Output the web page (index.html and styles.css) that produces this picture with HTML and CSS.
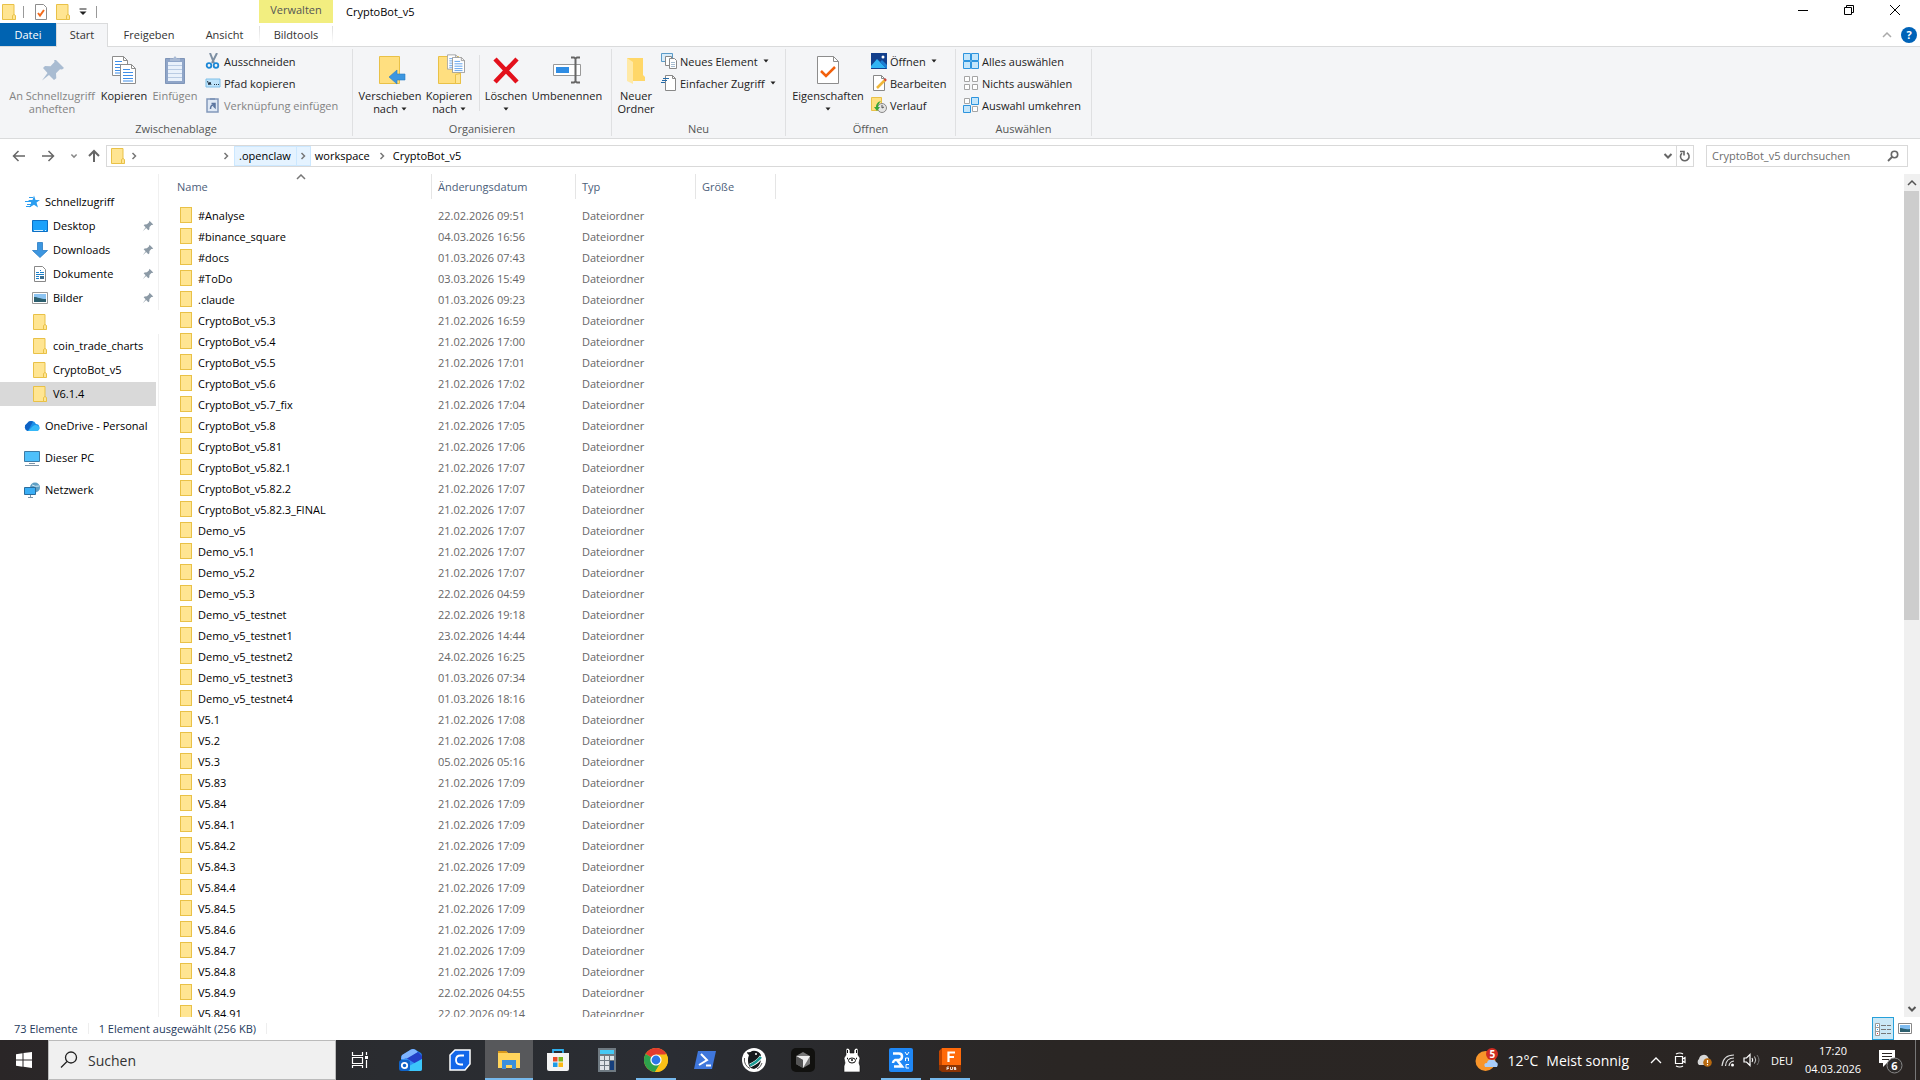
FILE: index.html
```html
<!DOCTYPE html>
<html lang="de">
<head>
<meta charset="utf-8">
<title>CryptoBot_v5</title>
<link rel="stylesheet" href="styles.css">
</head>
<body>
<svg class="defs" aria-hidden="true">
  <symbol id="folder" viewBox="0 0 14 16"><path d="M.5.5h11.500v11l1 .5v3.500H.5z" fill="#ffe592" stroke="#e9c147"/><path d="M10.500 15.500v-4l1.500-1 1.500 1v4z" fill="#ffe592" stroke="#e9c147"/></symbol>
  <symbol id="pin" viewBox="0 0 16 16"><path d="M10 1l5 5-1.500.8-1-.1-2.500 2.600-.2 3-1.300 1.200-3-3L1 15l3.800-5.200-2.600-2.700 1.300-1.200 3-.1 2.700-2.500z"/></symbol>
  <symbol id="chev" viewBox="0 0 8 8"><path d="M2.500 1L5.500 4l-3 3" fill="none" stroke="#777" stroke-width="1.500"/></symbol>
  <symbol id="down" viewBox="0 0 10 8"><path d="M1.500 2L5 5.500 8.500 2" fill="none" stroke="currentColor" stroke-width="2"/></symbol>
  <symbol id="up" viewBox="0 0 10 8"><path d="M1 6l4-4 4 4" fill="none" stroke="currentColor" stroke-width="1.500"/></symbol>
  <symbol id="tri" viewBox="0 0 6 4"><path d="M.5.5h5L3 3.500z" fill="#222"/></symbol>
  <symbol id="lines" viewBox="0 0 16 20"><path d="M.5.5h11l4 4v15H.5z" fill="#fff" stroke="#8d8d8d"/><path d="M11.500.5v4h4" fill="none" stroke="#8d8d8d"/><path d="M3 5.500h7M3 8.500h10M3 11.500h10M3 14.500h10M3 17h10" stroke="#3f8ee8"/></symbol>
</svg>

<header class="titlebar">
  <div class="quick">
    <svg width="14" height="16"><use href="#folder"/></svg><i class="tick"></i>
    <button type="button" aria-label="Eigenschaften"><svg width="12" height="16" viewBox="0 0 12 16"><path d="M.5.5h8l3 3v12H.5z" fill="#fff" stroke="#8d8d8d"/><path d="M3 9l2 2.500L9 6" fill="none" stroke="#f26a1b" stroke-width="2"/></svg></button>
    <button type="button" aria-label="Neuer Ordner"><svg width="14" height="16"><use href="#folder"/></svg></button>
    <button type="button" aria-label="Anpassen"><svg width="8" height="8" viewBox="0 0 8 8"><path d="M.5 1h7" stroke="#222"/><path d="M.5 3.500h7L4 7z" fill="#222"/></svg></button><i class="tick"></i>
  </div>
  <div class="context">Verwalten</div>
  <h1>CryptoBot_v5</h1>
  <div class="winbtns">
    <button type="button" aria-label="Minimieren"><svg width="10" height="10"><path d="M0 5.500h10" stroke="#000"/></svg></button>
    <button type="button" aria-label="Verkleinern"><svg width="10" height="10"><path d="M.5 2.500h7v7h-7zM2.500 2.500v-2h7v7h-2" fill="none" stroke="#000"/></svg></button>
    <button type="button" aria-label="Schließen"><svg width="10" height="10"><path d="M0 0l10 10M10 0L0 10" stroke="#000"/></svg></button>
  </div>
</header>

<nav class="tabs">
  <a class="file" href="#datei">Datei</a><a class="active" href="#start">Start</a><a class="share" href="#freigeben">Freigeben</a><a class="view" href="#ansicht">Ansicht</a><a class="tools" href="#bildtools">Bildtools</a>
  <div class="help">
    <button type="button" aria-label="Menüband minimieren"><svg width="10" height="8" color="#aaa"><use href="#up"/></svg></button>
    <button type="button" class="q" aria-label="Hilfe">?</button>
  </div>
</nav>

<section class="ribbon">
  <div class="group clipboard">
    <div class="tools-row">
      <button type="button" class="big w94 off"><svg width="32" height="32" viewBox="0 0 32 32"><path d="M20 6l8 8-2 1.500-2-.3-4 4 .3 5L18 26l-5-5-7 5.500 5.500-7.500-4.500-5 2-2 5.500.2 4-4.200-.3-2z" fill="#a9bcd2"/></svg>An Schnellzugriff anheften</button>
      <button type="button" class="big w50"><svg width="32" height="32" viewBox="0 0 32 32"><use href="#lines" x="4" y="2" width="16" height="20"/><use href="#lines" x="12" y="10" width="16" height="20"/></svg>Kopieren</button>
      <button type="button" class="big w52 off"><svg width="32" height="32" viewBox="0 0 32 32"><path d="M6.500 4.500h19v25h-19z" fill="#8fa5c8" stroke="#7f95b8"/><path d="M9 8h14v19H9z" fill="#e9f1fb"/><path d="M9 11.500h14M9 15.500h14M9 19.500h14M9 23.500h14" stroke="#b9cbe3"/><path d="M11 7V4.500h3L16 2l2 2.500h3V7z" fill="#a9bad4"/></svg>Einfügen</button>
      <div class="stack">
        <button type="button"><svg width="16" height="16" viewBox="0 0 16 16"><path d="M5 0l4 10M12 0L7 10" stroke="#7d8fa3" stroke-width="2"/><circle cx="4" cy="12.500" r="2.300" fill="none" stroke="#1c87d6" stroke-width="1.800"/><circle cx="11" cy="12.500" r="2.300" fill="none" stroke="#1c87d6" stroke-width="1.800"/></svg>Ausschneiden</button>
        <button type="button"><svg width="16" height="16" viewBox="0 0 16 16"><path d="M1 4h14v8H1z" fill="#bfe4fb" stroke="#7ebfe8"/><path d="M2.500 6l1.500 4 1-3 1 3M9 9.500h1M11 9.500h1M13 9.500h1" fill="none" stroke="#234"/></svg>Pfad kopieren</button>
        <button type="button" class="off"><svg width="16" height="16" viewBox="0 0 16 16"><path d="M2 2h11v13H2z" fill="#dfe9f6" stroke="#8298ba" stroke-width="1.500"/><path d="M5 1h5v2H5z" fill="#8298ba"/><path d="M5.500 12c0-3 1-4 3-4V6.500H6.500 10v4L8.500 9" fill="none" stroke="#5c76a0" stroke-width="1.500"/></svg>Verknüpfung einfügen</button>
      </div>
    </div>
    <h2>Zwischenablage</h2>
  </div>
  <div class="group organize">
    <div class="tools-row">
      <button type="button" class="big w68"><svg width="32" height="32" viewBox="0 0 32 32"><path d="M5.500 2.500h20v27h-20z" fill="#ffdf80" stroke="#e9c147"/><path d="M31 20h-8v-4l-8 7 8 7v-4h8z" fill="#3c96e0" stroke="#2a7cc4" stroke-width=".6"/></svg><span>Verschieben nach <svg class="tri" width="6" height="4"><use href="#tri"/></svg></span></button>
      <button type="button" class="big w50"><svg width="32" height="32" viewBox="0 0 32 32"><path d="M5.500 2.500h20l2 18v9h-22z" fill="#ffdf80" stroke="#e9c147"/><path d="M22.500 29.500v-9l5-1v10z" fill="#ffe592" stroke="#e9c147"/><use href="#lines" x="14" y="0" width="12" height="16"/><use href="#lines" x="19" y="3" width="13" height="16"/></svg><span>Kopieren nach <svg class="tri" width="6" height="4"><use href="#tri"/></svg></span></button>
      <i class="vsep"></i>
      <button type="button" class="big w42"><svg width="32" height="32" viewBox="0 0 32 32"><path d="M5 5l22 23M27 5L5 28" stroke="#e3101b" stroke-width="4.500"/></svg><span>Löschen<br><svg class="tri" width="6" height="4"><use href="#tri"/></svg></span></button>
      <button type="button" class="big w80"><svg width="32" height="32" viewBox="0 0 32 32"><path d="M2.500 10.500h27v11h-27z" fill="#fff" stroke="#999"/><path d="M5 13h13v6H5z" fill="#2f8de4"/><path d="M24.500 4v24M20 3.500h3l1.500 1 1.500-1h3M20 28.500h3l1.500-1 1.500 1h3" stroke="#666" stroke-width="2" fill="none"/></svg>Umbenennen</button>
    </div>
    <h2>Organisieren</h2>
  </div>
  <div class="group">
    <div class="tools-row">
      <button type="button" class="big w48"><svg width="32" height="32" viewBox="0 0 32 32"><path d="M7 4h16v17l2 2v4H7z" fill="#ffd768"/><path d="M7 4l6 4v22l-6-3z" fill="#ffe9a6"/></svg>Neuer Ordner</button>
      <div class="stack">
        <button type="button"><svg width="16" height="16" viewBox="0 0 16 16"><path d="M.5.5h11v8H.5z" fill="#d8ecfa" stroke="#5b9bc8"/><path d="M4.500 3.500h6v9h-6z" fill="#fff" stroke="#888"/><path d="M8.500 5.500h5l2 2v8h-7z" fill="#fff" stroke="#888"/><path d="M10 9.500h4M10 11.500h4M10 13.500h4" stroke="#a6bcd0"/></svg>Neues Element <svg class="tri" width="6" height="4"><use href="#tri"/></svg></button>
        <button type="button"><svg width="16" height="16" viewBox="0 0 16 16"><path d="M4.500.5h7l3 3v12h-10z" fill="#fff" stroke="#888"/><path d="M11.500.5v3h3" fill="none" stroke="#888"/><path d="M2 3.500h6M1 5.500h5M0 7.500h4" stroke="#256ba8"/></svg>Einfacher Zugriff <svg class="tri" width="6" height="4"><use href="#tri"/></svg></button>
      </div>
    </div>
    <h2>Neu</h2>
  </div>
  <div class="group">
    <div class="tools-row">
      <button type="button" class="big w84"><svg width="32" height="32" viewBox="0 0 32 32"><path d="M5.500 2.500h16l5 5v22h-21z" fill="#fff" stroke="#8d8d8d"/><path d="M21.500 2.500v5h5" fill="none" stroke="#8d8d8d"/><path d="M9 17l5 5 9-9" fill="none" stroke="#f2600c" stroke-width="2.500"/></svg><span>Eigenschaften<br><svg class="tri" width="6" height="4"><use href="#tri"/></svg></span></button>
      <div class="stack">
        <button type="button"><svg width="16" height="16" viewBox="0 0 16 16"><path d="M0 0h16v16H0z" fill="#123f8c"/><path d="M0 13l6-7 9 9H0z" fill="#30b4f4"/><path d="M9 9l2-2 5 5v4z" fill="#1c7fd4"/><circle cx="12" cy="4" r="1.500" fill="#fff"/></svg>Öffnen <svg class="tri" width="6" height="4"><use href="#tri"/></svg></button>
        <button type="button"><svg width="16" height="16" viewBox="0 0 16 16"><path d="M2.500.5h8l3 3v12h-11z" fill="#fff" stroke="#888"/><path d="M10.500.5v3h3" fill="none" stroke="#888"/><path d="M6 13l8-8" stroke="#efb63a" stroke-width="2.500"/><path d="M13.500 5.500L15 4" stroke="#d0463c" stroke-width="2.500"/></svg>Bearbeiten</button>
        <button type="button"><svg width="16" height="16" viewBox="0 0 16 16"><path d="M.5.5h10v13H.5z" fill="#ffe07f" stroke="#e9c147"/><circle cx="11" cy="11" r="4.500" fill="#e4e4e4" stroke="#888"/><path d="M11 8v3l2-1" stroke="#555" fill="none"/><path d="M10 4c-4 1-5 4-5 6H3l3 4 3-4H7c0-2 1-4 3-6z" fill="#3aa53a"/></svg>Verlauf</button>
      </div>
    </div>
    <h2>Öffnen</h2>
  </div>
  <div class="group select">
    <div class="tools-row">
      <div class="stack">
        <button type="button"><svg width="16" height="16" viewBox="0 0 16 16"><path d="M.5.5h7v7h-7zM8.500.5h7v7h-7zM.5 8.500h7v7h-7zM8.500 8.500h7v7h-7z" fill="#c4e6fb" stroke="#2d94de"/></svg>Alles auswählen</button>
        <button type="button"><svg width="16" height="16" viewBox="0 0 16 16"><path d="M1.500 1.500h5v5h-5zM9.500 1.500h5v5h-5zM1.500 9.500h5v5h-5zM9.500 9.500h5v5h-5z" fill="#fff" stroke="#a5a5a5"/></svg>Nichts auswählen</button>
        <button type="button"><svg width="16" height="16" viewBox="0 0 16 16"><path d="M1.500 1.500h5v5h-5zM9.500 9.500h5v5h-5z" fill="#fff" stroke="#a5a5a5"/><path d="M8.500.5h7v7h-7zM.5 8.500h7v7h-7z" fill="#c4e6fb" stroke="#2d94de"/></svg>Auswahl umkehren</button>
      </div>
    </div>
    <h2>Auswählen</h2>
  </div>
</section>

<div class="addressbar">
  <div class="history">
    <button type="button" aria-label="Zurück"><svg width="14" height="12" viewBox="0 0 14 12"><path d="M13 6H2M6.500 1l-5 5 5 5" fill="none" stroke="#666" stroke-width="1.500"/></svg></button>
    <button type="button" aria-label="Vorwärts"><svg width="14" height="12" viewBox="0 0 14 12"><path d="M1 6h11M7.500 1l5 5-5 5" fill="none" stroke="#666" stroke-width="1.500"/></svg></button>
    <button type="button" aria-label="Verlauf"><svg width="8" height="6" color="#888"><use href="#down"/></svg></button>
    <button type="button" aria-label="Nach oben"><svg width="12" height="14" viewBox="0 0 12 14"><path d="M6 13V2M1 7l5-5 5 5" fill="none" stroke="#666" stroke-width="2"/></svg></button>
  </div>
  <div class="path">
    <svg width="14" height="16"><use href="#folder"/></svg>
    <svg class="first" width="8" height="8"><use href="#chev"/></svg>
    <svg width="8" height="8"><use href="#chev"/></svg>
    <div class="crumb hot"><a href="#openclaw">.openclaw</a><span><svg width="8" height="8"><use href="#chev"/></svg></span></div>
    <div class="crumb"><a href="#workspace">workspace</a><span><svg width="8" height="8"><use href="#chev"/></svg></span></div>
    <div class="crumb"><a href="#cryptobot">CryptoBot_v5</a></div>
    <div class="path-end">
      <button type="button" aria-label="Vorherige Orte"><svg width="10" height="8" color="#666"><use href="#down"/></svg></button>
      <button type="button" class="reload" aria-label="Aktualisieren"><svg width="12" height="12" viewBox="0 0 12 12"><path d="M8 2.800A4.300 4.300 0 1 1 3 3.200M1 1.500h4v4" fill="none" stroke="#666" stroke-width="1.600"/></svg></button>
    </div>
  </div>
  <form class="search">
    <input type="text" aria-label="CryptoBot_v5 durchsuchen" placeholder="CryptoBot_v5 durchsuchen">
    <svg width="12" height="12" viewBox="0 0 12 12"><circle cx="7.500" cy="4.500" r="3.200" fill="none" stroke="#666" stroke-width="1.600"/><path d="M5 7L1 11" stroke="#666" stroke-width="1.800"/></svg>
  </form>
</div>

<main>
  <nav class="side">
    <ul>
      <li class="root"><svg width="16" height="16" viewBox="0 0 16 16"><path d="M9 1.500l1.500 4.500H15l-3.500 2.600L13 13.500l-4-2.800-4.500 2.800 1.700-5L3 6h4.500z" fill="#2a9df0"/><path d="M4 3.500h4M0 7.500h6M2 10.500h4M1 12.500h5" stroke="#2a9df0"/></svg><a href="#s">Schnellzugriff</a></li>
      <li><svg width="16" height="16" viewBox="0 0 16 16"><path d="M.5 2.500h15v11H.5z" fill="#1ba1fb" stroke="#0c6fc4"/><path d="M2 12.500h9M13 12.500h1" stroke="#d5efff"/></svg><a href="#d">Desktop</a><svg class="pin" width="12" height="12"><use href="#pin"/></svg></li>
      <li><svg width="16" height="16" viewBox="0 0 16 16"><path d="M5.500.5h5v8h5L8 15.500.5 8.500h5z" fill="#3c96e0" stroke="#2a7cc4" stroke-width=".8"/></svg><a href="#dl">Downloads</a><svg class="pin" width="12" height="12"><use href="#pin"/></svg></li>
      <li><svg width="16" height="16" viewBox="0 0 16 16"><path d="M2.500.5h8l3 3v12h-11z" fill="#fff" stroke="#888"/><path d="M4 6.500h3M8 4.500h1M8 6.500h4M4 8.500h8M4 10.500h3M4 12.500h3" stroke="#1b7fc8"/><path d="M8 10h4v3H8z" fill="#3b6e8f"/></svg><a href="#dok">Dokumente</a><svg class="pin" width="12" height="12"><use href="#pin"/></svg></li>
      <li><svg width="16" height="16" viewBox="0 0 16 16"><path d="M.5 2.500h15v11H.5z" fill="#fff" stroke="#999"/><path d="M2 4h12v8H2z" fill="#8cc4f2"/><path d="M2 7c4 0 6 2 12 2v3H2z" fill="#2c5f6e"/></svg><a href="#b">Bilder</a><svg class="pin" width="12" height="12"><use href="#pin"/></svg></li>
      <li class="blank"><svg width="16" height="16"><use href="#folder"/></svg></li>
      <li><svg width="16" height="16"><use href="#folder"/></svg><a href="#c">coin_trade_charts</a></li>
      <li><svg width="16" height="16"><use href="#folder"/></svg><a href="#cb">CryptoBot_v5</a></li>
      <li class="current"><svg width="16" height="16"><use href="#folder"/></svg><a href="#v">V6.1.4</a></li>
      <li class="root gap"><svg width="16" height="16" viewBox="0 0 16 16"><path d="M4 13a4 4 0 0 1-1-7.500A5 5 0 0 1 12 6a3.600 3.600 0 0 1 1 7z" fill="#1a8ee8"/><path d="M4 13a4 4 0 0 1-1-7.500 5 5 0 0 1 6-2L4 13z" fill="#0f62c4"/><path d="M4 13l5-5a4 4 0 0 1 6.500 2c0 2-1.500 3-2.500 3z" fill="#35b8f8"/></svg><a href="#o">OneDrive - Personal</a></li>
      <li class="root gap"><svg width="16" height="16" viewBox="0 0 16 16"><path d="M.5 1.500h15v10H.5z" fill="#4fc0fb" stroke="#3d7ba6"/><path d="M5 13.500h6M1 15.500h14" stroke="#7c93a6"/></svg><a href="#p">Dieser PC</a></li>
      <li class="root gap"><svg width="16" height="16" viewBox="0 0 16 16"><circle cx="11" cy="5.500" r="5" fill="#5f9fc4"/><path d="M8 3q3 2 7 1" stroke="#d5e9f3" fill="none"/><path d="M.5 5.500h11v7H.5z" fill="#3aaef5" stroke="#2a6c9c"/><path d="M4 15.500h5M6.500 13v2" stroke="#7c93a6"/></svg><a href="#n">Netzwerk</a></li>
    </ul>
  </nav>
  <div class="files">
    <table>
      <colgroup><col class="c-name"><col class="c-date"><col class="c-type"><col class="c-size"></colgroup>
      <thead><tr><th>Name<svg class="sort" width="10" height="8"><use href="#up"/></svg></th><th>Änderungsdatum</th><th>Typ</th><th>Größe</th></tr></thead>
      <tbody>
      <tr><td>#Analyse</td><td>22.02.2026 09:51</td><td>Dateiordner</td><td></td></tr>
      <tr><td>#binance_square</td><td>04.03.2026 16:56</td><td>Dateiordner</td><td></td></tr>
      <tr><td>#docs</td><td>01.03.2026 07:43</td><td>Dateiordner</td><td></td></tr>
      <tr><td>#ToDo</td><td>03.03.2026 15:49</td><td>Dateiordner</td><td></td></tr>
      <tr><td>.claude</td><td>01.03.2026 09:23</td><td>Dateiordner</td><td></td></tr>
      <tr><td>CryptoBot_v5.3</td><td>21.02.2026 16:59</td><td>Dateiordner</td><td></td></tr>
      <tr><td>CryptoBot_v5.4</td><td>21.02.2026 17:00</td><td>Dateiordner</td><td></td></tr>
      <tr><td>CryptoBot_v5.5</td><td>21.02.2026 17:01</td><td>Dateiordner</td><td></td></tr>
      <tr><td>CryptoBot_v5.6</td><td>21.02.2026 17:02</td><td>Dateiordner</td><td></td></tr>
      <tr><td>CryptoBot_v5.7_fix</td><td>21.02.2026 17:04</td><td>Dateiordner</td><td></td></tr>
      <tr><td>CryptoBot_v5.8</td><td>21.02.2026 17:05</td><td>Dateiordner</td><td></td></tr>
      <tr><td>CryptoBot_v5.81</td><td>21.02.2026 17:06</td><td>Dateiordner</td><td></td></tr>
      <tr><td>CryptoBot_v5.82.1</td><td>21.02.2026 17:07</td><td>Dateiordner</td><td></td></tr>
      <tr><td>CryptoBot_v5.82.2</td><td>21.02.2026 17:07</td><td>Dateiordner</td><td></td></tr>
      <tr><td>CryptoBot_v5.82.3_FINAL</td><td>21.02.2026 17:07</td><td>Dateiordner</td><td></td></tr>
      <tr><td>Demo_v5</td><td>21.02.2026 17:07</td><td>Dateiordner</td><td></td></tr>
      <tr><td>Demo_v5.1</td><td>21.02.2026 17:07</td><td>Dateiordner</td><td></td></tr>
      <tr><td>Demo_v5.2</td><td>21.02.2026 17:07</td><td>Dateiordner</td><td></td></tr>
      <tr><td>Demo_v5.3</td><td>22.02.2026 04:59</td><td>Dateiordner</td><td></td></tr>
      <tr><td>Demo_v5_testnet</td><td>22.02.2026 19:18</td><td>Dateiordner</td><td></td></tr>
      <tr><td>Demo_v5_testnet1</td><td>23.02.2026 14:44</td><td>Dateiordner</td><td></td></tr>
      <tr><td>Demo_v5_testnet2</td><td>24.02.2026 16:25</td><td>Dateiordner</td><td></td></tr>
      <tr><td>Demo_v5_testnet3</td><td>01.03.2026 07:34</td><td>Dateiordner</td><td></td></tr>
      <tr><td>Demo_v5_testnet4</td><td>01.03.2026 18:16</td><td>Dateiordner</td><td></td></tr>
      <tr><td>V5.1</td><td>21.02.2026 17:08</td><td>Dateiordner</td><td></td></tr>
      <tr><td>V5.2</td><td>21.02.2026 17:08</td><td>Dateiordner</td><td></td></tr>
      <tr><td>V5.3</td><td>05.02.2026 05:16</td><td>Dateiordner</td><td></td></tr>
      <tr><td>V5.83</td><td>21.02.2026 17:09</td><td>Dateiordner</td><td></td></tr>
      <tr><td>V5.84</td><td>21.02.2026 17:09</td><td>Dateiordner</td><td></td></tr>
      <tr><td>V5.84.1</td><td>21.02.2026 17:09</td><td>Dateiordner</td><td></td></tr>
      <tr><td>V5.84.2</td><td>21.02.2026 17:09</td><td>Dateiordner</td><td></td></tr>
      <tr><td>V5.84.3</td><td>21.02.2026 17:09</td><td>Dateiordner</td><td></td></tr>
      <tr><td>V5.84.4</td><td>21.02.2026 17:09</td><td>Dateiordner</td><td></td></tr>
      <tr><td>V5.84.5</td><td>21.02.2026 17:09</td><td>Dateiordner</td><td></td></tr>
      <tr><td>V5.84.6</td><td>21.02.2026 17:09</td><td>Dateiordner</td><td></td></tr>
      <tr><td>V5.84.7</td><td>21.02.2026 17:09</td><td>Dateiordner</td><td></td></tr>
      <tr><td>V5.84.8</td><td>21.02.2026 17:09</td><td>Dateiordner</td><td></td></tr>
      <tr><td>V5.84.9</td><td>22.02.2026 04:55</td><td>Dateiordner</td><td></td></tr>
      <tr><td>V5.84.91</td><td>22.02.2026 09:14</td><td>Dateiordner</td><td></td></tr>
      </tbody>
    </table>
  </div>
  <div class="scrollbar">
    <button type="button" aria-label="Nach oben scrollen"><svg width="10" height="8"><use href="#up"/></svg></button>
    <div class="track"><div class="thumb"></div></div>
    <button type="button" aria-label="Nach unten scrollen"><svg width="10" height="8"><use href="#down"/></svg></button>
  </div>
</main>

<footer class="status">
  <span>73 Elemente</span><span>1 Element ausgewählt (256 KB)</span>
  <div class="views">
    <button type="button" class="on" aria-label="Details"><svg width="18" height="16" viewBox="0 0 18 16"><path d="M1.500 2.500h4v12h-4zM1.500 6.500h4M1.500 10.500h4" fill="#fff" stroke="#999"/><path d="M3 4.500h1" stroke="#2a9df0"/><path d="M3 8.500h1" stroke="#2a9df0"/><path d="M3 12.500h1" stroke="#d33"/><path d="M7 4.500h5M13 4.500h4M7 8.500h5M13 8.500h4M7 12.500h5M13 12.500h4" stroke="#777"/></svg></button>
    <button type="button" aria-label="Große Symbole"><svg width="14" height="11" viewBox="0 0 14 11"><path d="M.5.5h13v10H.5z" fill="#fff" stroke="#888"/><path d="M2 2h10v7H2z" fill="#7fbcf0"/><path d="M2 5c4 0 5 2 10 1v3H2z" fill="#2c5f6e"/></svg></button>
  </div>
</footer>

<footer class="taskbar">
  <button type="button" class="start" aria-label="Start"><svg width="16" height="16" viewBox="0 0 16 16"><path d="M0 2.200L6.500 1.300V7.500H0zM7.500 1.100L16 0v7.500H7.500zM0 8.500h6.500v6.200L0 13.800zM7.500 8.500H16V16l-8.500-1.200z" fill="#fff"/></svg></button>
  <label class="tsearch"><svg width="18" height="18" viewBox="0 0 18 18"><circle cx="11" cy="6.500" r="5.500" fill="none" stroke="#222" stroke-width="1.300"/><path d="M7 10.500l-6 6" stroke="#222" stroke-width="1.300"/></svg><input type="text" aria-label="Suchen" placeholder="Suchen"></label>
  <div class="apps">
    <button type="button" class="tv" aria-label="Aktive Anwendungen"><svg width="18" height="16" viewBox="0 0 18 16"><path d="M1.500 0v3.500h10V0M1.500 5.500h10v6h-10zM1.500 16v-2.500h10V16M15.500 0v3M15.500 8v8" fill="none" stroke="#fff" stroke-width="1.200"/><path d="M14 4h3v3h-3z" fill="#fff"/></svg></button>
    <button type="button" aria-label="Outlook"><svg width="24" height="24" viewBox="0 0 24 24"><path d="M2 8L12 1.500q2-1 4 0L22 5q1 1 1 3v13q0 2-2 2H5q-3 0-3-2z" fill="#1f7be0"/><path d="M3 7l9-5.500q2-1 4 0L19 4 7 12 2 11z" fill="#7fb4ff"/><path d="M7 11L19 4l4 4v3l-9 6-7-3z" fill="#2440c8"/><path d="M3 12l4-2 10 6-2 3H4z" fill="#2f8cf5"/><path d="M10 18l13-7v10q0 2-2 2H8z" fill="#3cc6fa"/><rect x="0" y="12" width="11" height="11" rx="2.500" fill="#0f63c8"/><circle cx="5.500" cy="17.500" r="2.700" fill="none" stroke="#fff" stroke-width="1.800"/></svg></button>
    <button type="button" aria-label="C-App"><svg width="22" height="22" viewBox="0 0 22 22"><path d="M6 1h15v14l-5 6H1V6z" fill="#1267ea" stroke="#fff" stroke-width="1.500"/><path d="M15 6.500h-3.500Q7 6.500 7 11t4.500 4.500H14" fill="none" stroke="#fff" stroke-width="1.800"/></svg></button>
    <button type="button" class="cur" aria-label="Explorer"><svg width="22" height="20" viewBox="0 0 22 20"><path d="M0 1h8l2 2h12v15H0z" fill="#ffd45c"/><path d="M0 1h8l2 2H0z" fill="#d99a1c"/><path d="M4 19v-9h14v9h-4v-4H8v4z" fill="#3b8fdc"/></svg></button>
    <button type="button" aria-label="Store"><svg width="24" height="24" viewBox="0 0 24 24"><path d="M7 6V2h10v4" fill="none" stroke="#2fb0ee" stroke-width="1.800"/><path d="M1 5h22v16q0 2-2 2H3q-2 0-2-2z" fill="#f4f4f4"/><path d="M7 9h4.500v4.500H7z" fill="#e84a27"/><path d="M12.500 9H17v4.500h-4.500z" fill="#7db71e"/><path d="M7 14.500h4.500V19H7z" fill="#1d9be6"/><path d="M12.500 14.500H17V19h-4.500z" fill="#fbb814"/></svg></button>
    <button type="button" aria-label="Rechner"><svg width="18" height="24" viewBox="0 0 18 24"><path d="M0 0h18v24H0z" fill="#6f7a82"/><path d="M2 2h14v4H2z" fill="#45c8f4"/><path d="M2 8h4v4H2zM7 8h4v4H7zM12 8h4v4h-4zM2 13h4v4H2zM7 13h4v4H7zM2 18h4v4H2zM7 18h4v4H7z" fill="#dfe4e8"/><path d="M12 13h4v9h-4z" fill="#163f7c"/></svg></button>
    <button type="button" class="run" aria-label="Chrome"><svg width="24" height="24" viewBox="0 0 24 24"><circle cx="12" cy="12" r="12" fill="#fbc116"/><path d="M12 12L1.600 6A12 12 0 0 1 22.400 6z" fill="#e33b2e"/><path d="M12 12L1.600 6A12 12 0 0 0 11 24l6-10z" fill="#2da24c"/><path d="M12 6.500h10.600A12 12 0 0 1 11 24l5.500-9z" fill="#fbc116"/><circle cx="12" cy="12" r="5.600" fill="#fff"/><circle cx="12" cy="12" r="4.400" fill="#2c76e8"/></svg></button>
    <button type="button" aria-label="PowerShell"><svg width="24" height="20" viewBox="0 0 24 20"><path d="M5 1h18l-4 18H1z" fill="#3f77dc"/><path d="M8 4l6 6-8 5M13 15.500h5" fill="none" stroke="#fff" stroke-width="2"/></svg></button>
    <button type="button" aria-label="Zeichnen"><svg width="24" height="24" viewBox="0 0 24 24"><circle cx="12" cy="12" r="12" fill="#fff"/><path d="M5 4q3 1 5-1 6-1 9 4-1 2 0 5-1 7-7 9-6-1-6-8 0-4 1-6Q5 6 5 4z" fill="#16191c"/><circle cx="14" cy="6" r="1" fill="#fff"/><path d="M19.500 8.500Q16 14 8 17.500" stroke="#fff" stroke-width="4" fill="none"/><path d="M19 9Q15 14 8 17.500" stroke="#1b9b94" stroke-width="2.500" fill="none"/><path d="M2.500 10A9.500 9.500 0 0 0 8 20.500M20 15A9 9 0 0 1 15 21" fill="none" stroke="#555"/></svg></button>
    <button type="button" aria-label="Cursor"><svg width="24" height="24" viewBox="0 0 24 24"><rect width="24" height="24" rx="5" fill="#11110f"/><path d="M12 4l7 4v8l-7 4-7-4V8z" fill="#777"/><path d="M5 8h14l-7 12V12z" fill="#eee"/><path d="M5 8l7 4v8l-7-4z" fill="#555"/></svg></button>
    <button type="button" aria-label="Ollama"><svg width="18" height="24" viewBox="0 0 18 24"><path d="M1 24v-6l1-3-1-5 2-3V1l2-1 2 2v3h4V2l2-2 2 1v6l2 3-1 5 1 3v6z" fill="#fff" stroke="#111" stroke-width=".6"/><path d="M4.500 2v3M13.500 2v3" stroke="#111"/><ellipse cx="9" cy="12.500" rx="3.500" ry="2.500" fill="none" stroke="#111"/><path d="M4 10.500h1M13 10.500h1M8 12h2" stroke="#111" stroke-width="1.500"/></svg></button>
    <button type="button" class="run" aria-label="VNC"><svg width="24" height="24" viewBox="0 0 24 24"><rect width="24" height="24" rx="2" fill="#1f87f5"/><path d="M4 5.500h6q3 0 3 3t-3 3.500H6q-2 1-2 3M8 12l5 6.500H5" fill="none" stroke="#fff" stroke-width="2.500"/><path d="M16 4l2 3 2-3M16.500 13v-3h3v3M20 16.500h-3V20h3" fill="none" stroke="#fff"/></svg></button>
    <button type="button" class="run" aria-label="Fusion"><svg width="22" height="24" viewBox="0 0 22 24"><path d="M0 3l3-3v20l-3 2z" fill="#c44600"/><path d="M3 0h19v17H3z" fill="#ff6a0a"/><path d="M0 17h22v7H3l-3-2z" fill="#8c3404"/><path d="M9.500 14V4.500H16M9.500 9H15" stroke="#fff" stroke-width="2.200" fill="none"/><path d="M8 22v-3h2M8 20.500h2M11.500 19v2.500h2V19M17 19.500h-2v1h2v1h-2" stroke="#fff" stroke-width=".8" fill="none"/></svg></button>
  </div>
  <div class="tray">
    <div class="weather"><svg width="24" height="24" viewBox="0 0 24 24"><circle cx="10.500" cy="13" r="10" fill="#f8952a"/><path d="M10 19q-2-4 2-4 1-4 5-3 2-1 4 2 3 1 1 5z" fill="#a9cdf8"/><circle cx="17" cy="6" r="6" fill="#cf2c22"/></svg><b>5</b><span>12°C</span><span>Meist sonnig</span></div>
    <button type="button" aria-label="Ausgeblendete Symbole"><svg width="12" height="8" viewBox="0 0 12 8"><path d="M1 7l5-5 5 5" fill="none" stroke="#fff" stroke-width="1.300"/></svg></button>
    <button type="button" aria-label="Besprechung"><svg width="12" height="16" viewBox="0 0 12 16"><path d="M1.500 4.500h7v7h-7zM8.500 7l2.500-1.500v5L8.500 9M2 2q4-2 7 0M2 14q4 2 7 0" fill="none" stroke="#fff" stroke-width="1.200"/></svg></button>
    <button type="button" aria-label="OneDrive"><svg width="16" height="14" viewBox="0 0 16 14"><path d="M3 12a4 4 0 0 1 0-6 5 5 0 0 1 9-2l2 5-4 3z" fill="#d7d7d7"/><circle cx="11.500" cy="9.500" r="4.300" fill="#b8690f"/><path d="M11.500 7v3M11.500 11v1.200" stroke="#fff" stroke-width="1.200"/></svg></button>
    <button type="button" aria-label="WLAN"><svg width="14" height="14" viewBox="0 0 14 14"><path d="M1 13Q2 2 13 2M4.500 13q.5-8 8.500-8M8 13q.5-4.500 5-5" fill="none" stroke="#ddd" stroke-width="1.200"/><circle cx="11.500" cy="12" r="1.500" fill="#fff"/></svg></button>
    <button type="button" aria-label="Lautstärke"><svg width="18" height="14" viewBox="0 0 18 14"><path d="M1 5h2.500L7 1.500v11L3.500 9H1zM9 5q1.500 2 0 4" fill="none" stroke="#fff" stroke-width="1.200"/><path d="M11.500 3.500q2.500 3.500 0 7" fill="none" stroke="#ccc"/><path d="M14 2q4 5 0 10" fill="none" stroke="#777"/></svg></button>
    <span class="lang">DEU</span>
    <time>17:20<br>04.03.2026</time>
    <button type="button" class="notes" aria-label="Benachrichtigungen"><svg width="24" height="24" viewBox="0 0 24 24"><path d="M0 0h16v13H8l-4 4v-4H0z" fill="#fff"/><path d="M3 3.500h10M3 6.500h10M3 9.500h7" stroke="#2a2523"/><circle cx="15.500" cy="15.500" r="7.500" fill="#2d2a29" stroke="#888"/></svg><b>6</b></button>
    <i class="edge"></i>
  </div>
</footer>
</body>
</html>
```
FILE: styles.css
```css
* { box-sizing: border-box; }
body {
  margin: 0;
  height: 100vh;
  display: flex;
  flex-direction: column;
  overflow: hidden;
  background: #fff;
  color: #000;
  font: 11px/13px "Open Sans", "Noto Sans", sans-serif;
}
svg { display: block; flex: none; }
.defs { position: absolute; width: 0; height: 0; }
button { border: 0; padding: 0; margin: 0; background: none; font: inherit; color: inherit; }
a { color: inherit; text-decoration: none; }
h1, h2 { margin: 0; font: inherit; }
input { border: 0; outline: 0; padding: 0; background: none; font: inherit; min-width: 0; }
header, .tabs, .ribbon, .addressbar, .status, .taskbar { flex: none; }

/* Title bar */
.titlebar { display: flex; height: 23px; }
.quick { display: flex; align-items: center; width: 259px; padding-left: 2px; }
.quick .tick { width: 1px; height: 12px; background: #999; margin: 0 11px 0 7px; }
.quick button { margin-right: 9px; }
.quick button + .tick { margin-left: 0; }
.context { width: 74px; background: #f2ee80; color: #555; text-align: center; line-height: 20px; }
.titlebar h1 { padding-left: 13px; line-height: 23px; }
.winbtns { margin-left: auto; padding-right: 2px; display: flex; }
.winbtns button { width: 46px; height: 20px; display: grid; place-items: center; }

/* Tabs */
.tabs { display: flex; height: 23px; line-height: 23px; color: #333; text-align: center; }
.tabs .file { width: 56px; background: #0063b1; color: #fff; }
.tabs .active { width: 52px; height: 24px; z-index: 1; background: #f4f5f7; border: 1px solid #dadbdc; border-bottom: 0; line-height: 22px; }
.tabs .share { width: 82px; }
.tabs .view { width: 69px; }
.tabs .tools { width: 74px; background: linear-gradient(#ddd, #fff) left / 1px 18px no-repeat, linear-gradient(#ddd, #fff) right / 1px 18px no-repeat; }
.help { margin-left: auto; display: flex; align-items: center; gap: 9px; padding-right: 3px; }
.help .q { width: 16px; height: 16px; border-radius: 50%; background: #0063b8; color: #fff; font-weight: 700; line-height: 16px; }

/* Ribbon */
.ribbon {
  display: grid;
  grid-template-columns: 353px 259px 174px 170px 136px;
  height: 93px;
  padding: 2px 0;
  background: #f4f5f7;
  border: solid #dadbdc;
  border-width: 1px 0;
  color: #222;
}
.group { border-right: 1px solid #dfe0e2; display: flex; flex-direction: column; justify-content: space-between; }
.group h2 { color: #555; text-align: center; line-height: 14px; }
.organize .tools-row { padding-left: 3px; }
.select .tools-row { padding-left: 6px; }
.tools-row { display: flex; height: 70px; }
.big { display: flex; flex-direction: column; align-items: center; padding-top: 5px; gap: 3px; }
.big .tri { display: inline-block; vertical-align: 2px; }
.w42 { width: 42px; }
.w48 { width: 48px; }
.w50 { width: 50px; }
.w52 { width: 52px; }
.w68 { width: 68px; }
.w80 { width: 80px; }
.w84 { width: 84px; }
.w94 { width: 94px; margin-left: 5px; }
.off { color: #838383; }
.vsep { width: 1px; height: 56px; margin: 6px 5px 0; background: #dfe0e2; }
.stack { padding: 1px 0 0 1px; }
.clipboard .stack { padding-left: 4px; }
.stack button { display: flex; align-items: center; height: 22px; gap: 3px; white-space: nowrap; }
.stack .tri { margin-left: 2px; }

/* Address bar */
.addressbar { display: flex; height: 35px; padding: 6px 12px 7px 0; }
.history { display: flex; align-items: center; width: 106px; padding-left: 12px; gap: 15px; }
.history button:last-child { margin-left: -5px; }
.path { flex: 1; display: flex; align-items: center; border: 1px solid #d9d9d9; padding-left: 4px; }
.path .first { margin: 0 84px 0 5px; }
.crumb { display: flex; align-items: center; height: 20px; }
.crumb a { padding: 0 5px 1px 4px; }
.crumb span { width: 14px; height: 20px; display: grid; place-items: center; }
.hot { background: #e5f3ff; border: 1px solid #cce8ff; margin-left: 4px; }
.hot span { border-left: 1px solid #cce8ff; }
.path-end { margin-left: auto; display: flex; height: 20px; }
.path-end button { width: 17px; display: grid; place-items: center; }
.path-end .reload { border-left: 1px solid #d9d9d9; }
.search { display: flex; align-items: center; width: 202px; margin-left: 12px; padding: 0 8px 0 5px; border: 1px solid #d9d9d9; }
.search input { flex: 1; padding-bottom: 1px; }
.search input::placeholder { color: #6d6d6d; opacity: 1; }

/* Main area */
main { flex: 1; min-height: 0; display: flex; overflow: hidden; }
.side { width: 159px; flex: none; padding-top: 16px; background: linear-gradient(#f0f0f0, #f0f0f0) right / 1px 100% no-repeat; }
.side ul { list-style: none; margin: 0; padding: 0; }
.side li { display: flex; align-items: center; height: 24px; gap: 5px; margin-right: 3px; padding: 0 2px 0 32px; white-space: nowrap; }
.side li a { padding-bottom: 1px; }
.side .root { padding-left: 24px; }
.side .gap { margin-top: 8px; }
.side .blank { margin-right: 0; background: #fff; }
.side .current { background: #d9d9d9; }
.side .root:first-child { padding-left: 25px; gap: 4px; }
.pin { margin-left: auto; fill: #8c9aa6; }
.files { flex: 1; overflow: hidden; }
table { border-collapse: collapse; table-layout: fixed; width: 617px; }
.c-name { width: 273px; }
.c-date { width: 144px; }
.c-type { width: 120px; }
.c-size { width: 80px; }
th { position: relative; height: 31px; padding: 0 0 7px 6px; text-align: left; font-weight: 400; color: #4c607a; background: linear-gradient(#e5e5e5, #e5e5e5) right top / 1px 25px no-repeat; }
th:first-child { padding-left: 18px; }
.sort { position: absolute; left: 137px; top: -1px; color: #777; }
td { height: 21px; padding: 0 0 1px 6px; color: #666; white-space: nowrap; }
td:first-child {
  padding-left: 39px;
  color: #000;
  background: linear-gradient(#e9c147, #e9c147) 32px 11px / 1px 6px no-repeat, linear-gradient(#ffe592, #ffe592) 22px 3px / 10px 14px no-repeat, linear-gradient(#e9c147, #e9c147) 21px 2px / 12px 16px no-repeat;
}
.scrollbar { width: 16px; flex: none; display: flex; flex-direction: column; background: #f0f0f0; color: #555; }
.scrollbar button { height: 17px; display: grid; place-items: center; }
.track { flex: 1; padding-right: 1px; }
.thumb { height: 53%; background: #cdcdcd; }

/* Status bar */
.status { display: flex; height: 23px; padding-left: 4px; color: #1e395b; }
.status span { height: 11px; margin-top: 6px; padding: 0 10px; border-right: 1px solid #eee; line-height: 11px; }
.views { display: flex; align-items: center; gap: 4px; margin-left: auto; padding-right: 8px; }
.views .on { width: 22px; height: 23px; border: 1px solid #26a0da; background: #cbe8f6; display: grid; place-items: center; }

/* Taskbar */
.taskbar { display: flex; height: 40px; background: linear-gradient(90deg, #2a2627, #2a2c30 20%, #2a2d33 35%, #2a2624 55%, #2a2523); color: #fff; }
.start { width: 48px; display: grid; place-items: center; }
.tsearch { width: 288px; display: flex; align-items: center; gap: 10px; padding-left: 11px; background: #f0f0f0; border: 1px solid #bbb; font-size: 14px; }
.tsearch input::placeholder { color: #333; opacity: 1; }
.apps { display: flex; gap: 1px; }
.apps button { width: 48px; display: grid; place-items: center; }
.apps .tv { margin-right: 2px; }
.apps .cur { background: #57585b; box-shadow: inset 0 -2px #76b9ed; }
.apps .run { background: linear-gradient(#76b9ed, #76b9ed) bottom / 40px 2px no-repeat; }
.tray { margin-left: auto; display: flex; align-items: center; height: 40px; }
.tray > button { width: 24px; display: grid; place-items: center; }
.weather { position: relative; display: flex; align-items: center; gap: 8px; margin-right: 15px; font-size: 14px; }
.weather b { position: absolute; left: 14px; top: -1px; font-size: 10px; line-height: 14px; }
.lang { width: 22px; margin: 0 1px 0 7px; }
time { width: 78px; text-align: center; line-height: 18px; }
.tray .notes { position: relative; width: 24px; margin: 4px 12px 0 7px; }
.notes b { position: absolute; left: 8px; top: 9px; width: 15px; text-align: center; }
.edge { width: 5px; height: 40px; border-left: 1px solid #777; }
```
